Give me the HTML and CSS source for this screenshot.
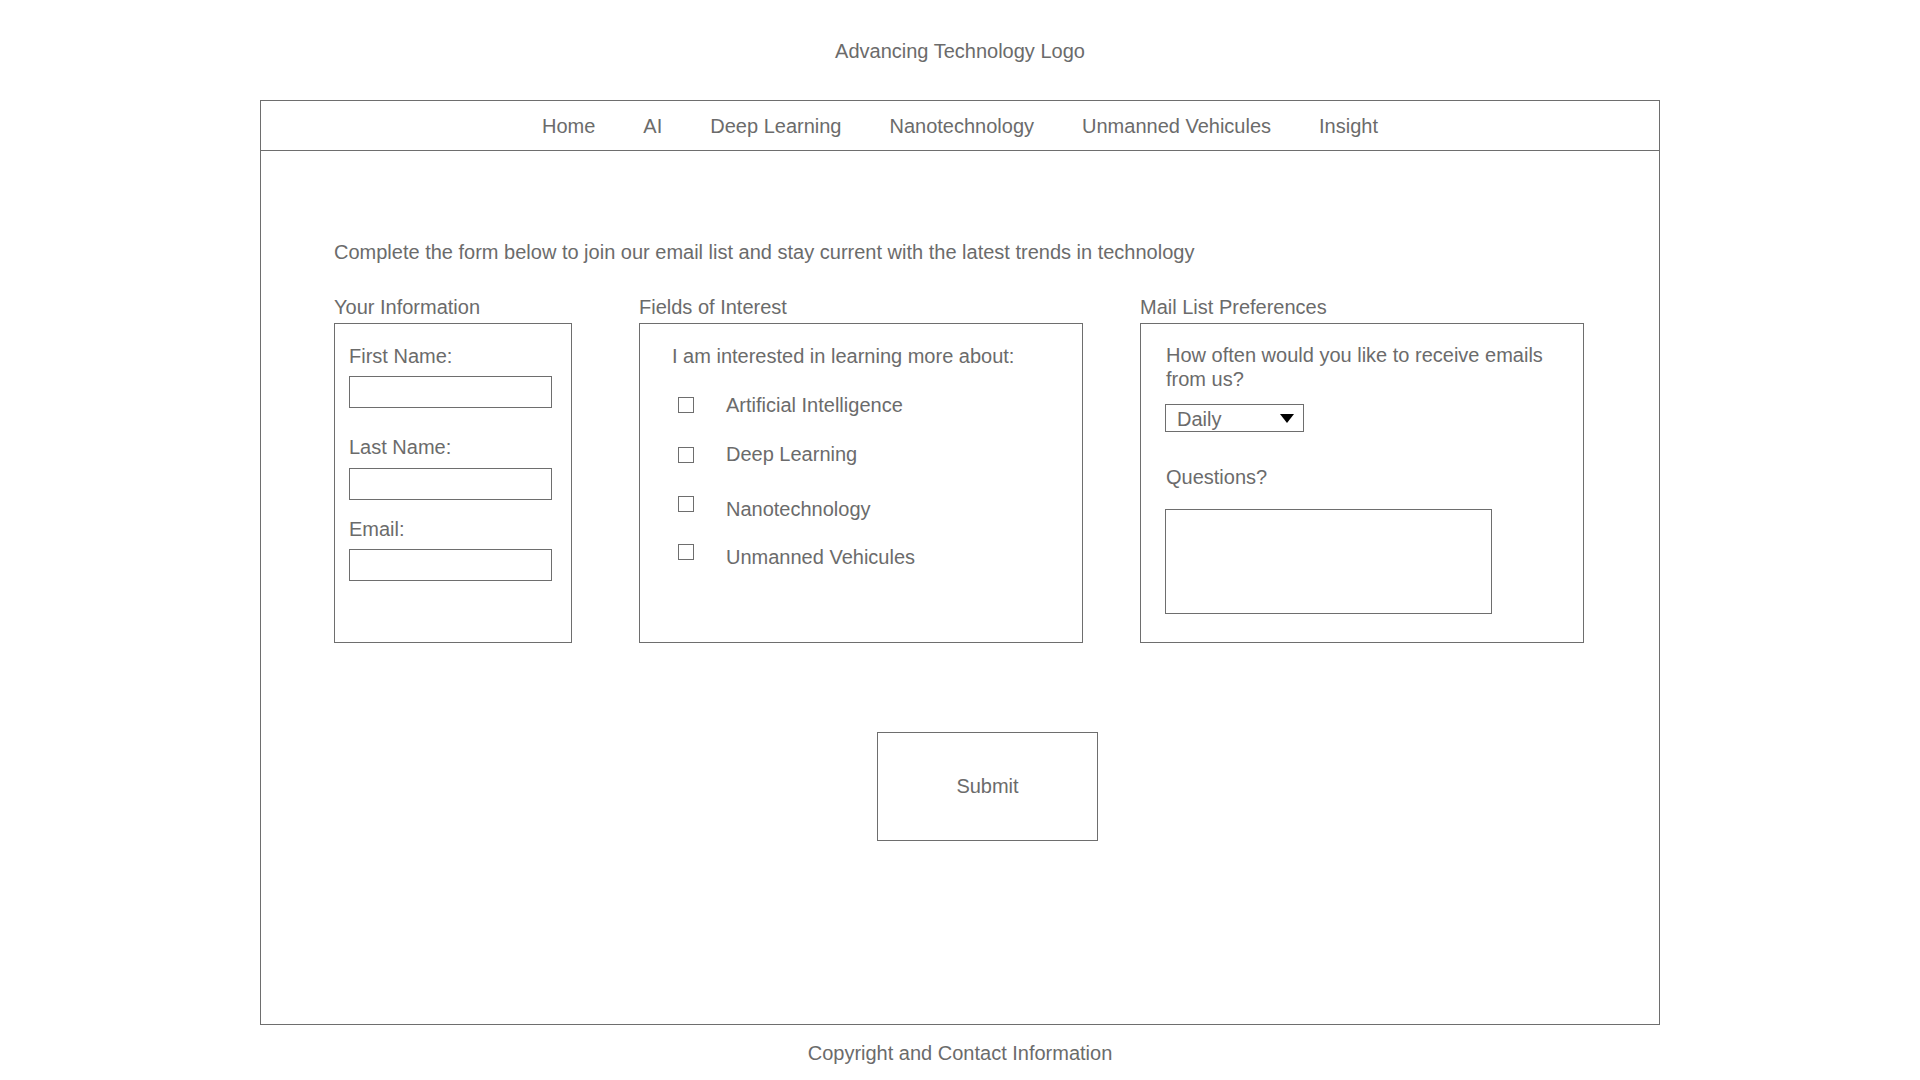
FILE: index.html
```html
<!DOCTYPE html>
<html lang="en">
<head>
<meta charset="utf-8">
<title>Advancing Technology</title>
<link rel="stylesheet" href="styles.css">
</head>
<body>
<header class="site-header"><span class="logo">Advancing Technology Logo</span></header>
<div class="frame">
  <nav class="nav">
    <a href="#">Home</a>
    <a href="#">AI</a>
    <a href="#">Deep Learning</a>
    <a href="#">Nanotechnology</a>
    <a href="#">Unmanned Vehicules</a>
    <a href="#">Insight</a>
  </nav>
  <main class="content">
    <p class="intro">Complete the form below to join our email list and stay current with the latest trends in technology</p>
    <div class="columns">
      <section class="col col-info">
        <h2 class="col-title">Your Information</h2>
        <div class="box box-info">
          <label class="field-label">First Name:</label>
          <input class="text-input" type="text">
          <label class="field-label l2">Last Name:</label>
          <input class="text-input i2" type="text">
          <label class="field-label l3">Email:</label>
          <input class="text-input" type="text">
        </div>
      </section>
      <section class="col col-interest">
        <h2 class="col-title">Fields of Interest</h2>
        <div class="box box-interest">
          <p class="interest-lead">I am interested in learning more about:</p>
          <label class="check-row r1"><input class="checkbox" type="checkbox"><span>Artificial Intelligence</span></label>
          <label class="check-row r2"><input class="checkbox" type="checkbox"><span>Deep Learning</span></label>
          <label class="check-row r3"><input class="checkbox" type="checkbox"><span>Nanotechnology</span></label>
          <label class="check-row r4"><input class="checkbox" type="checkbox"><span>Unmanned Vehicules</span></label>
        </div>
      </section>
      <section class="col col-prefs">
        <h2 class="col-title">Mail List Preferences</h2>
        <div class="box box-prefs">
          <p class="question">How often would you like to receive emails from us?</p>
          <div class="select-wrap">
            <select class="select">
              <option>Daily</option>
              <option>Weekly</option>
              <option>Monthly</option>
            </select>
            <span class="select-arrow"></span>
          </div>
          <label class="field-label questions-label">Questions?</label>
          <textarea class="textarea"></textarea>
        </div>
      </section>
    </div>
    <button class="submit" type="button">Submit</button>
  </main>
</div>
<footer class="site-footer">Copyright and Contact Information</footer>
</body>
</html>
```
FILE: styles.css
```css
* {
  box-sizing: border-box;
}

body {
  margin: 0;
  background: #ffffff;
  color: #6b6b6b;
  font-family: "Liberation Sans", Arial, Helvetica, sans-serif;
  font-size: 20px;
  line-height: 23px;
}

.site-header {
  height: 100px;
  padding-top: 2px;
  display: flex;
  align-items: center;
  justify-content: center;
}

.frame {
  width: 1400px;
  height: 925px;
  margin: 0 auto;
  border: 1px solid #6e6e6e;
}

.nav {
  height: 50px;
  padding-top: 2px;
  border-bottom: 1px solid #6e6e6e;
  display: flex;
  align-items: center;
  justify-content: center;
  gap: 48px;
}

.nav a {
  color: inherit;
  text-decoration: none;
}

.content {
  padding: 90px 0 0 73px;
}

.intro {
  margin: 0;
}

.columns {
  display: flex;
  margin-top: 32px;
}

.col-title {
  margin: 0 0 4px;
  font-size: 20px;
  font-weight: normal;
  line-height: 23px;
}

.col-info {
  width: 238px;
}

.col-interest {
  width: 444px;
  margin-left: 67px;
}

.col-prefs {
  width: 444px;
  margin-left: 57px;
}

.box {
  height: 320px;
  border: 1px solid #6e6e6e;
  padding-top: 21px;
}

.field-label {
  display: block;
}

/* Your Information */
.box-info {
  padding-left: 14px;
}

.text-input {
  display: block;
  width: 203px;
  height: 32px;
  margin: 8px 0 0;
  padding: 0 6px;
  border: 1px solid #6e6e6e;
  border-radius: 0;
  background: #ffffff;
  appearance: none;
  font: inherit;
  color: inherit;
  outline: none;
}

.l2 {
  margin-top: 28px;
}

.i2 {
  margin-top: 9px;
}

.l3 {
  margin-top: 18px;
}

/* Fields of Interest */
.box-interest {
  padding-left: 32px;
}

.interest-lead {
  margin: 0;
}

.check-row {
  display: flex;
  align-items: flex-start;
}

.checkbox {
  appearance: none;
  width: 16px;
  height: 16px;
  margin: 0 32px 0 6px;
  border: 1px solid #6e6e6e;
  border-radius: 0;
  background: #ffffff;
  flex: none;
}

.r1 { margin-top: 26px; }
.r1 .checkbox { margin-top: 3px; }
.r2 { margin-top: 26px; }
.r2 .checkbox { margin-top: 4px; }
.r3 { margin-top: 32px; }
.r3 .checkbox { margin-top: -2px; }
.r4 { margin-top: 25px; }
.r4 .checkbox { margin-top: -2px; }

/* Mail List Preferences */
.box-prefs {
  padding-top: 19px;
  padding-left: 25px;
  padding-right: 26px;
}

.question {
  margin: 0;
  line-height: 24px;
}

.select-wrap {
  position: relative;
  width: 139px;
  height: 28px;
  margin: 13px 0 0 -1px;
}

.select {
  appearance: none;
  display: block;
  width: 100%;
  height: 100%;
  margin: 0;
  padding: 2px 0 0 11px;
  border: 1px solid #6e6e6e;
  border-radius: 0;
  background: #ffffff;
  font: inherit;
  color: inherit;
  outline: none;
}

.select-arrow {
  position: absolute;
  top: 10px;
  right: 10px;
  width: 0;
  height: 0;
  border-left: 7px solid transparent;
  border-right: 7px solid transparent;
  border-top: 9px solid #000000;
  pointer-events: none;
}

.questions-label {
  margin-top: 34px;
}

.textarea {
  display: block;
  width: 327px;
  height: 105px;
  margin: 20px 0 0 -1px;
  border: 1px solid #6e6e6e;
  border-radius: 0;
  resize: none;
  font: inherit;
  color: inherit;
  outline: none;
}

/* Submit */
.submit {
  display: block;
  width: 221px;
  height: 109px;
  margin: 89px 0 0 543px;
  border: 1px solid #6e6e6e;
  border-radius: 0;
  background: #ffffff;
  font: inherit;
  color: inherit;
  cursor: pointer;
}

.site-footer {
  padding-top: 17px;
  text-align: center;
}
```
